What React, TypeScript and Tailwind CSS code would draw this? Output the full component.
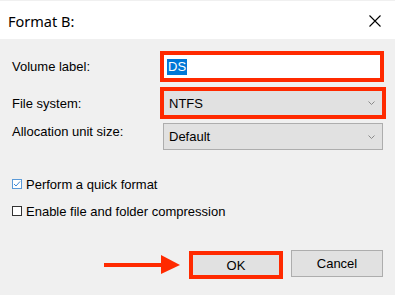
import React from "react";

const RED = "#ff2a00";

function Chevron() {
  return (
    <svg width="7" height="4" viewBox="0 0 7 4" className="block">
      <path d="M0.5 0.5 L3.5 3.5 L6.5 0.5" fill="none" stroke="#8a8a8a" strokeWidth="1" />
    </svg>
  );
}

export default function App() {
  return (
    <div
      className="w-[395px] h-[295px] bg-[#f0f0f0] pt-[1px] overflow-hidden text-black"
      style={{ fontFamily: '"Liberation Sans", Arial, sans-serif' }}
    >
      {/* Title bar */}
      <div className="h-[38px] bg-white flex items-center justify-between pl-[8px] pr-[14px]">
        <span
          className="text-[14.5px] leading-none text-[#000] mt-[2px]"
          style={{ fontFamily: '"Noto Sans", "Open Sans", sans-serif' }}
        >
          Format B:
        </span>
        <svg width="12" height="12" viewBox="0 0 12 12" className="block mt-[2px]">
          <path d="M0.5 0.5 L11.5 11.5 M11.5 0.5 L0.5 11.5" stroke="#000" strokeWidth="1.1" fill="none" />
        </svg>
      </div>

      {/* Body */}
      <div className="pt-[12px] text-[13px] leading-none">
        {/* Volume label */}
        <div className="flex items-center h-[31px]">
          <span className="w-[160px] pl-[12px]">Volume label:</span>
          <div className="w-[224px] h-[31px] border-[4px] border-[#ff2a00] bg-white flex items-center pl-[3px]">
            <span className="bg-[#0078d7] text-white h-[16px] px-[1px] flex items-center">DS</span>
          </div>
        </div>

        {/* File system */}
        <div className="flex items-center h-[32px] mt-[5px]">
          <span className="w-[160px] pl-[12px]">File system:</span>
          <div className="w-[226px] h-[32px] border-[4px] border-[#ff2a00] bg-[#e1e1e1] flex items-center justify-between pl-[5px] pr-[7px]">
            <span>NTFS</span>
            <Chevron />
          </div>
        </div>

        {/* Allocation unit size */}
        <div className="flex items-start h-[27px] mt-[4px]">
          <span className="w-[163px] pl-[12px] mt-[2px]">Allocation unit size:</span>
          <div className="w-[220px] h-[27px] border border-[#adadad] bg-[#e1e1e1] flex items-center justify-between pl-[5px] pr-[7px]">
            <span>Default</span>
            <Chevron />
          </div>
        </div>

        {/* Checkbox 1 */}
        <div className="flex items-center h-[16px] mt-[26px] pl-[12px]">
          <div className="w-[10px] h-[10px] border border-[#5a9ad8] bg-white flex items-center justify-center">
            <svg width="8" height="8" viewBox="0 0 8 8" className="block">
              <path d="M1 4 L3 6 L7 1.5" fill="none" stroke="#3a86d4" strokeWidth="1" />
            </svg>
          </div>
          <span className="ml-[4px]">Perform a quick format</span>
        </div>

        {/* Checkbox 2 */}
        <div className="flex items-center h-[16px] mt-[11px] pl-[12px]">
          <div className="w-[10px] h-[10px] border border-[#333333] bg-white" />
          <span className="ml-[4px]">Enable file and folder compression</span>
        </div>

        {/* Buttons */}
        <div className="flex items-start mt-[31px] pl-[104px]">
          <svg width="77" height="20" viewBox="0 0 77 20" className="block mt-[5px]">
            <rect x="0" y="8" width="59" height="4" fill={RED} />
            <path d="M57 0 L76 10 L57 19 Z" fill={RED} />
          </svg>
          <div className="ml-[8px] mt-[1px] w-[94px] h-[28px] border-[4px] border-[#ff2a00] bg-[#e1e1e1] flex items-center justify-center">
            OK
          </div>
          <div className="ml-[8px] w-[92px] h-[27px] border border-[#adadad] bg-[#e1e1e1] flex items-center justify-center">
            Cancel
          </div>
        </div>
      </div>
    </div>
  );
}
